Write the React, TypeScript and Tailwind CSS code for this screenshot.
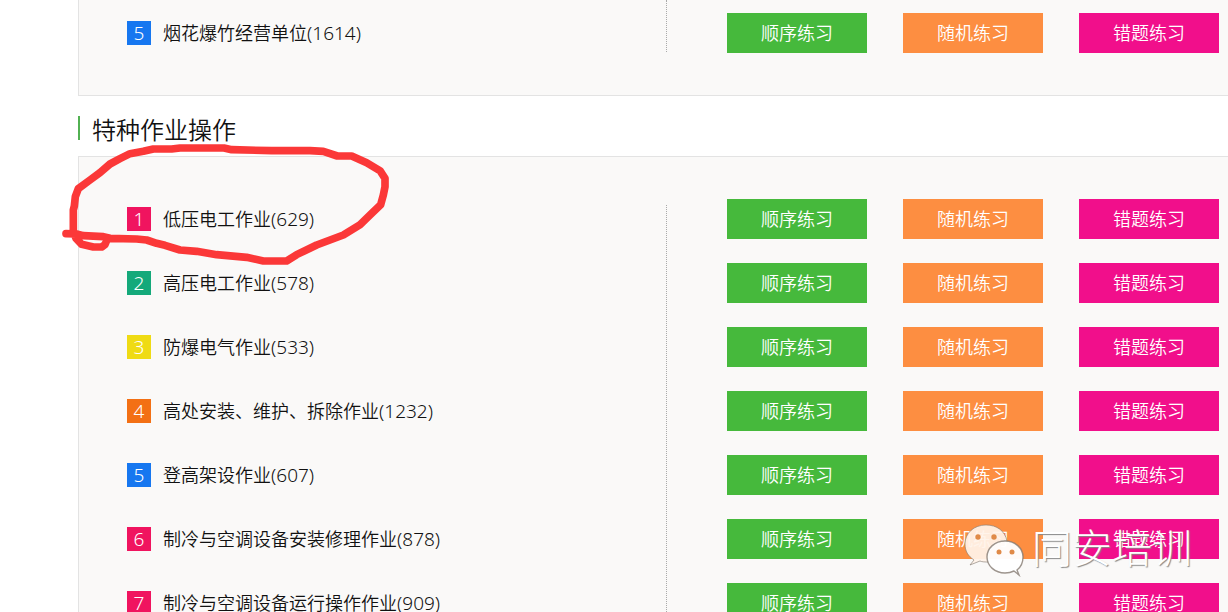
type Item = { no: number; name: string; count: number; color: string };

const fireworks: Item[] = [
  { no: 5, name: "烟花爆竹经营单位", count: 1614, color: "bg-[#1677f0]" },
];

const special: Item[] = [
  { no: 1, name: "低压电工作业", count: 629, color: "bg-[#f0145f]" },
  { no: 2, name: "高压电工作业", count: 578, color: "bg-[#14a97a]" },
  { no: 3, name: "防爆电气作业", count: 533, color: "bg-[#efdb14]" },
  { no: 4, name: "高处安装、维护、拆除作业", count: 1232, color: "bg-[#f37014]" },
  { no: 5, name: "登高架设作业", count: 607, color: "bg-[#1677f0]" },
  { no: 6, name: "制冷与空调设备安装修理作业", count: 878, color: "bg-[#f0145f]" },
  { no: 7, name: "制冷与空调设备运行操作作业", count: 909, color: "bg-[#f0145f]" },
];

const actions = [
  { label: "顺序练习", color: "bg-[#46b93c]" },
  { label: "随机练习", color: "bg-[#fd8e41]" },
  { label: "错题练习", color: "bg-[#f10f8b]" },
];

function Names({ items }: { items: Item[] }) {
  return (
    <ul className="flex min-w-0 flex-1 flex-col gap-6 pl-12">
      {items.map((item) => (
        <li key={item.no} className="flex h-10 items-center gap-3">
          <span className={`h-6 w-6 text-center text-[19px] leading-6 text-white ${item.color}`}>
            {item.no}
          </span>
          <span className="whitespace-nowrap">
            {item.name}
            <span className="text-[19px] leading-none">({item.count})</span>
          </span>
        </li>
      ))}
    </ul>
  );
}

function Actions({ items }: { items: Item[] }) {
  return (
    <ul className="flex shrink-0 flex-col gap-6 pr-[9px] pl-[60px]">
      {items.map((item) => (
        <li key={item.no} className="flex gap-9">
          {actions.map((a) => (
            <button
              key={a.label}
              type="button"
              aria-label={`${item.name} ${a.label}`}
              className={`h-10 w-[140px] text-white ${a.color}`}
            >
              {a.label}
            </button>
          ))}
        </li>
      ))}
    </ul>
  );
}

function Circle() {
  return (
    <svg
      viewBox="0 0 1080 600"
      className="pointer-events-none absolute -top-[77px] -left-[29px] h-[200px] w-[360px]"
      fill="none"
      stroke="#fb3838"
      strokeWidth="23"
      strokeLinecap="round"
      strokeLinejoin="round"
      aria-hidden="true"
    >
      <path d="M48 461L80 462L100 467L160 470L180 475L260 477L290 480L320 490L345 496L390 510L440 514L500 524L590 532L640 543L710 543L740 524L800 495L880 465L930 434L960 405L992 374L1000 345L1005 320V295L990 272L950 248L905 228H862L820 214L780 212H665L545 209L522 204H390L365 207H310L280 214L240 221L210 236L180 252L150 278L120 300L85 326L76 350L73 378L70 390V455L78 475L95 493L130 501H155L165 494L169 484" />
    </svg>
  );
}

function Watermark() {
  return (
    <div className="pointer-events-none absolute right-9 bottom-8 flex items-end gap-2">
      <svg viewBox="0 0 60 56" className="h-14 w-[60px]" aria-hidden="true">
        <g stroke="#857a72" strokeOpacity="0.8">
          <path
            fill="#fff3ea"
            fillOpacity="0.93"
            strokeWidth="0.8"
            d="M22 1C10 1 1 9 1 20C1 27 4 32 10 36L6 41L16 37C18 38 21 38 25 38C22 28 29 18 43 17C41 7 33 1 22 1Z"
          />
          <path
            fill="#fff"
            fillOpacity="0.97"
            strokeWidth="1.4"
            d="M41 17C31 17 23 24 23 33C23 42 31 49 41 49C45 49 48 48 50 47L55 51L53 46C57 43 59 38 59 33C59 24 51 17 41 17Z"
          />
        </g>
        <g fill="#e08a48">
          <circle cx="14" cy="13" r="2.7" />
          <circle cx="30" cy="13" r="2.7" />
          <circle cx="35" cy="28" r="2.5" />
          <circle cx="48" cy="28" r="2.5" />
        </g>
      </svg>
      <span className="text-[40px] leading-[64px] font-light whitespace-nowrap text-white [text-shadow:1px_1px_1px_#888]">
        同安培训
      </span>
    </div>
  );
}

export default function App() {
  return (
    <main className="relative h-screen overflow-hidden bg-white pl-[78px] font-['Noto_Sans','Noto_Sans_CJK_SC',sans-serif] text-lg font-[350] text-[#111]">
      <section className="flex border-b border-l border-[#e3e3e3] bg-[#faf9f8]">
        <div className="flex flex-1 pt-[13px] pb-[42px]">
          <Names items={fireworks} />
        </div>
        <div className="mb-[43px] border-l border-dotted border-[#aaa]" />
        <div className="pt-[13px] pb-[42px]">
          <Actions items={fireworks} />
        </div>
      </section>

      <div className="h-[60px] pt-5">
        <h2 className="h-6 border-l-2 border-[#52b152] pl-3 text-2xl leading-7 font-[350]">
          特种作业操作
        </h2>
      </div>

      <section className="relative flex border-y border-l border-[#e3e3e3] bg-[#faf9f8]">
        <div className="flex flex-1 py-[42px]">
          <Names items={special} />
        </div>
        <div className="mt-12 mb-[43px] border-l border-dotted border-[#aaa]" />
        <div className="py-[42px]">
          <Actions items={special} />
        </div>
        <Circle />
      </section>

      <Watermark />
    </main>
  );
}
